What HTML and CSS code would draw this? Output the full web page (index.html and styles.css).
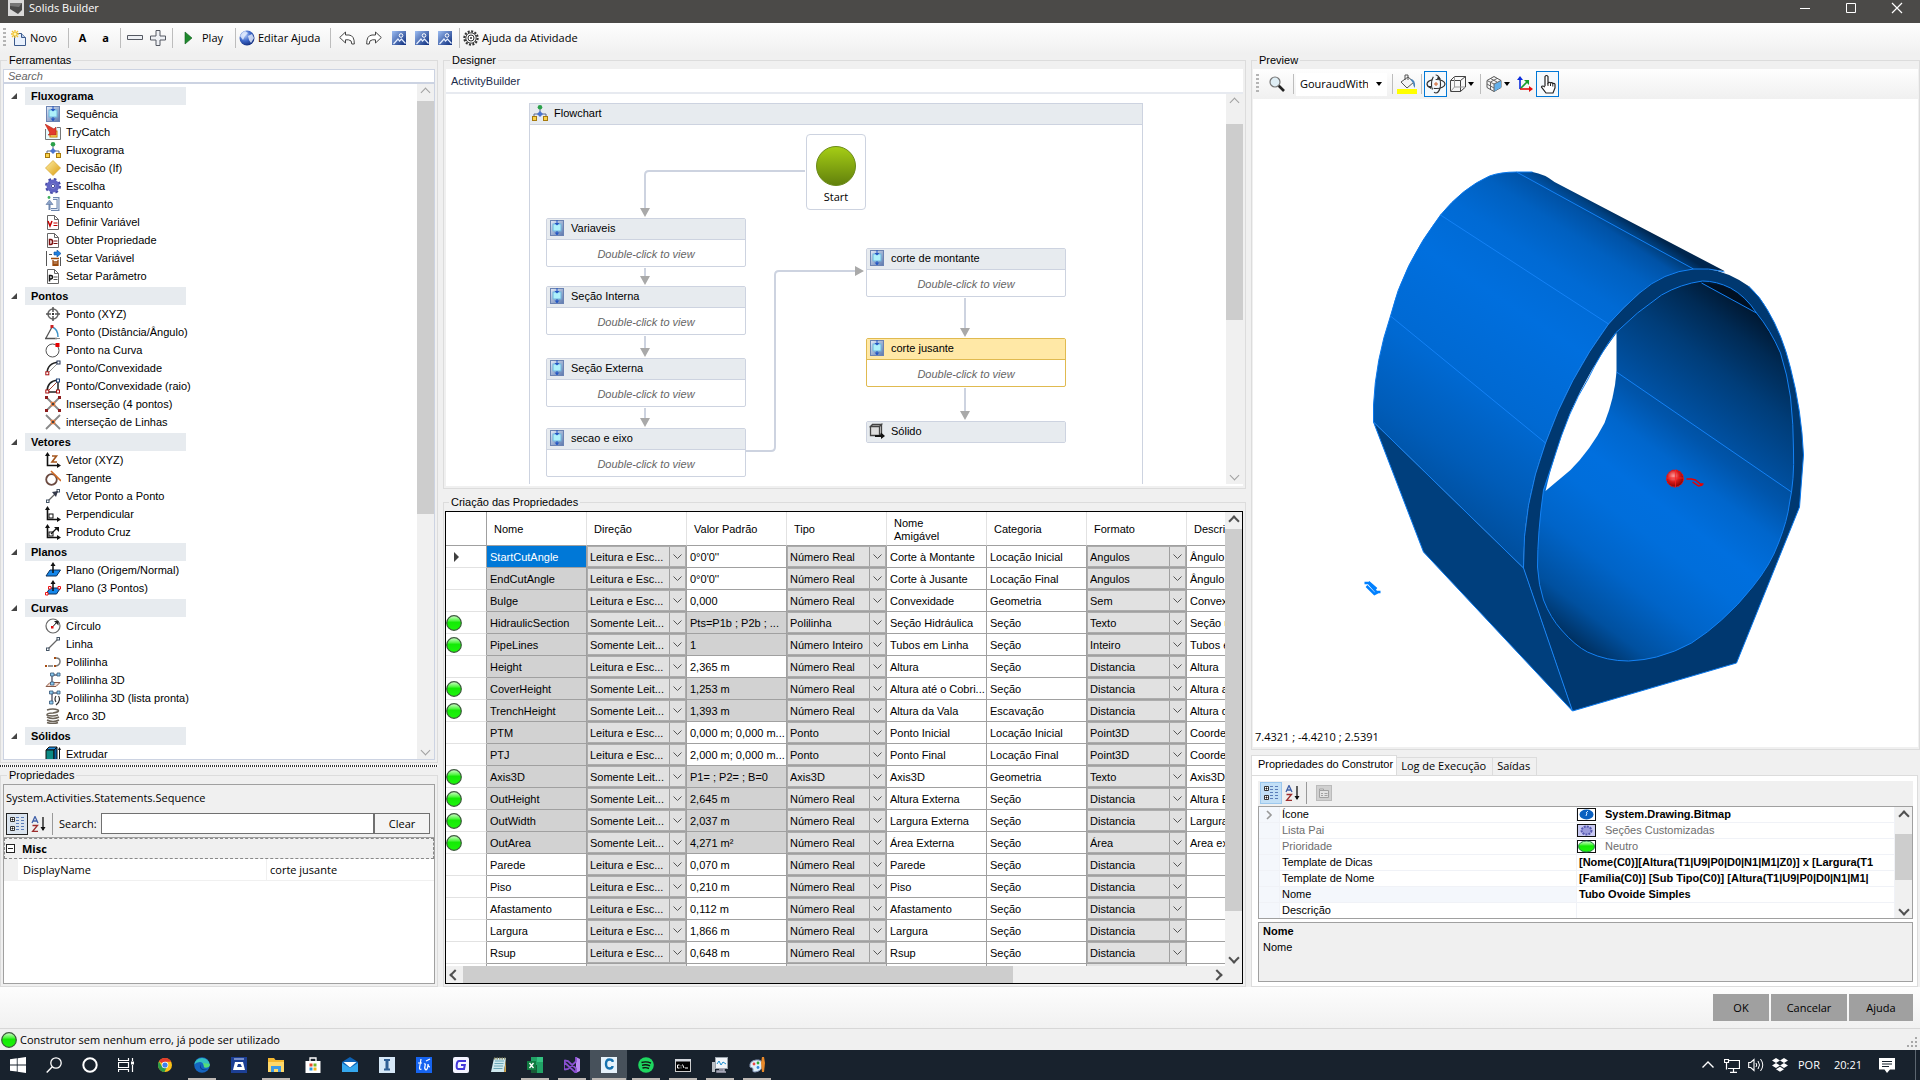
FILE: index.html
```html
<!DOCTYPE html>
<html lang="pt-BR">
<head>
<meta charset="utf-8">
<title>Solids Builder</title>
<link rel="stylesheet" href="styles.css">
</head>
<body>
<svg class="sprite" aria-hidden="true">
  <defs>
    <linearGradient id="g-seq" x1="0" y1="0" x2="1" y2="1"><stop offset="0" stop-color="#e4ecf8"/><stop offset="1" stop-color="#5c78ad"/></linearGradient>
    <linearGradient id="g-ball" x1="0" y1="0" x2="0" y2="1"><stop offset="0" stop-color="#d6ffd0"/><stop offset=".35" stop-color="#4df53e"/><stop offset=".45" stop-color="#14ea05"/><stop offset="1" stop-color="#1df40c"/></linearGradient>
    <linearGradient id="g-gold" x1="0" y1="0" x2="1" y2="1"><stop offset="0" stop-color="#fff0a8"/><stop offset="1" stop-color="#d99a0c"/></linearGradient>
    <linearGradient id="g-img" x1="0" y1="0" x2="1" y2="1"><stop offset="0" stop-color="#9dbdf2"/><stop offset="1" stop-color="#0a2b7c"/></linearGradient>
    <linearGradient id="g-start" x1="0" y1="0" x2="0" y2="1"><stop offset="0" stop-color="#a6ce15"/><stop offset="1" stop-color="#61800c"/></linearGradient>
    <radialGradient id="g-globe" cx=".35" cy=".3" r=".8"><stop offset="0" stop-color="#b9d0fb"/><stop offset=".5" stop-color="#3c66c8"/><stop offset="1" stop-color="#0c2471"/></radialGradient>
    <radialGradient id="g-red" cx=".4" cy=".35" r=".7"><stop offset="0" stop-color="#ff9a9a"/><stop offset=".5" stop-color="#d81a1a"/><stop offset="1" stop-color="#7c0000"/></radialGradient>
  </defs>
  <symbol id="i-seq" viewBox="0 0 16 16"><rect x="1.500" y=".5" width="13" height="15" fill="url(#g-seq)" stroke="#6b83b3"/><rect x="4" y="4" width="8" height="7" fill="#aef0fb" stroke="#6fb4dd"/><path d="M8 0v4M8 11v4" stroke="#2257c4"/><path d="M5.500 3h5L8 5.500zM5.500 12.500h5L8 15z" fill="#2257c4"/></symbol>
  <symbol id="i-try" viewBox="0 0 16 16"><path d="M.5 5v10.500h15V3.500H12" fill="#e6fbff" stroke="#777"/><rect x="5" y="7" width="7" height="6" fill="#fff36a" stroke="#c87d00"/><path d="M0 0l9 5 2-2 0 8H3l2-2z" fill="#e23b2b" stroke="#b4271a" stroke-width=".6"/></symbol>
  <symbol id="i-flow" viewBox="0 0 16 16"><path d="M8 3v6M2 12V9h12v3" fill="none" stroke="#5a6a8c"/><circle cx="8" cy="2.300" r="2.300" fill="#2aa14a"/><path d="M8 6l3 3-3 3-3-3z" fill="#4b74cf"/><rect x=".5" y="11.500" width="4" height="4" fill="#fbd34b" stroke="#a77a0d"/><rect x="11.500" y="11.500" width="4" height="4" fill="#fbd34b" stroke="#a77a0d"/></symbol>
  <symbol id="i-if" viewBox="0 0 16 16"><path d="M8 .5L15.500 8 8 15.500.5 8z" fill="url(#g-gold)" stroke="#d7a32a" stroke-width=".7"/></symbol>
  <symbol id="i-gear" viewBox="0 0 16 16"><circle cx="8" cy="8" r="6.500" fill="none" stroke="#4548a5" stroke-width="3" stroke-dasharray="2.500 2.600"/><circle cx="8" cy="8" r="4.500" fill="#b6b8ec" stroke="#6265c4" stroke-width="4"/><circle cx="8" cy="8" r="1.800" fill="#fff" stroke="#373a92"/></symbol>
  <symbol id="i-while" viewBox="0 0 16 16"><path d="M8 2.500h5v11H6" fill="none" stroke="#6f87ae" stroke-width="3"/><path d="M8 2.500h5v11H6" fill="none" stroke="#dce6f5"/><path d="M4.500 14V7" stroke="#6f87ae" stroke-width="2"/><path d="M1 8.500L4.500 4 8 8.500z" fill="#8ba2c7" stroke="#5d769f" stroke-width=".6"/><circle cx="4" cy="1.500" r="1.400" fill="#3faf5c"/></symbol>
  <symbol id="i-doc" viewBox="0 0 16 16"><path d="M2.500 1.500h7l4 4v10h-11z" fill="#fff" stroke="#666"/><path d="M9.500 1.500v4h4" fill="none" stroke="#666"/></symbol>
  <symbol id="i-docv" viewBox="0 0 16 16"><use href="#i-doc"/><path d="M3 7l2 5 2-5" fill="none" stroke="#c40000" stroke-width="1.500"/><path d="M8.500 9h4M8.500 11.500h4" stroke="#c40000"/></symbol>
  <symbol id="i-docd" viewBox="0 0 16 16"><use href="#i-doc"/><path d="M4.500 7.500v5h1.500q1.500 0 1.500-2.500T6 7.500z" fill="none" stroke="#7c1010" stroke-width="1.500"/><path d="M8.500 9h4M8.500 11.500h4" stroke="#7c1010"/></symbol>
  <symbol id="i-docp" viewBox="0 0 16 16"><use href="#i-doc"/><path d="M4.500 13.500v-6H6q1.500 0 1.500 1.700T6 11H4.500" fill="none" stroke="#111" stroke-width="1.500"/><path d="M8.500 9h4M8.500 11.500h4" stroke="#555"/></symbol>
  <symbol id="i-setv" viewBox="0 0 16 16"><path d="M1.500 1v15M15.500 7v9M4 4.500h3" stroke="#555"/><path d="M9 2h3V0l4 3.500L12 7V5H9z" fill="#1d7fe0" stroke="#0b4f9c" stroke-width=".6"/><path d="M6 8.500h8M8 10v5.500h5V10M8 12h5M8 14h5" fill="none" stroke="#9a4a0e" stroke-width="1.300"/></symbol>
  <symbol id="i-xyz" viewBox="0 0 16 16"><circle cx="8" cy="8" r="5" fill="none" stroke="#666" stroke-width="1.500"/><path d="M8 1v5M8 10v5M1 8h5M10 8h5" stroke="#555" stroke-width="1.500"/><rect x="7" y="7" width="2" height="2" fill="#333"/></symbol>
  <symbol id="i-ang" viewBox="0 0 16 16"><path d="M0 14.500h12M1 14L7 3" stroke="#555" stroke-width="1.300" fill="none"/><path d="M7 3q6 2 6 10" fill="none" stroke="#3d93c8" stroke-width="1.500"/><rect x="5.500" y="1" width="3" height="3" fill="#c22"/><path d="M10 14.500h5" stroke="#888"/></symbol>
  <symbol id="i-oncurve" viewBox="0 0 16 16"><circle cx="7.500" cy="8.500" r="6.500" fill="#fff" stroke="#555"/><rect x="10.500" y="1" width="4" height="4" fill="#e60000"/></symbol>
  <symbol id="i-conv" viewBox="0 0 16 16"><path d="M2 14Q2 3 14 2" fill="none" stroke="#222" stroke-width="1.500"/><path d="M3 13L13 3" stroke="#999"/><rect x=".8" y="11.800" width="3" height="3" fill="#fff" stroke="#a11"/><rect x="12" y="1" width="3" height="3" fill="#fff" stroke="#235"/></symbol>
  <symbol id="i-convr" viewBox="0 0 16 16"><path d="M2 14Q2 3 13 2V14H3z" fill="none" stroke="#222" stroke-width="1.500"/><path d="M3 13L13 3" stroke="#a43"/><rect x=".8" y="12" width="3" height="3" fill="#fff" stroke="#a11"/><rect x="11.500" y="1" width="3" height="3" fill="#fff" stroke="#247"/><rect x="11.500" y="12" width="3" height="3" fill="#fff" stroke="#a11"/></symbol>
  <symbol id="i-lines" viewBox="0 0 16 16"><path d="M1 1l14 14M15 1L1 15" stroke="#888" stroke-width="1.800"/><rect x="6.300" y="6.300" width="3.400" height="3.400" fill="#444" stroke="#f08040"/></symbol>
  <symbol id="i-int4" viewBox="0 0 16 16"><use href="#i-lines"/><path d="M0 0h3v3H0zM13 0h3v3h-3zM0 13h3v3H0zM13 13h3v3h-3z" fill="#8d1c1c"/></symbol>
  <symbol id="i-vec" viewBox="0 0 16 16"><path d="M2.500 2v11.500H14" fill="none" stroke="#111" stroke-width="1.600"/><path d="M0 4l2.500-4L5 4zM12 11l4 2.500-4 2.500z" fill="#111"/></symbol>
  <symbol id="i-vecz" viewBox="0 0 16 16"><use href="#i-vec"/><path d="M7 4h4.500L7 10h5" fill="none" stroke="#a4561c" stroke-width="1.600"/></symbol>
  <symbol id="i-tan" viewBox="0 0 16 16"><circle cx="6.500" cy="9.500" r="5.300" fill="none" stroke="#6b4a40" stroke-width="1.800"/><path d="M6 1l10 10" stroke="#d06a24" stroke-width="1.600"/></symbol>
  <symbol id="i-line" viewBox="0 0 16 16"><path d="M3 13L13 3" stroke="#666" stroke-width="1.300"/><rect x="1.500" y="12" width="2.500" height="2.500" fill="#fff" stroke="#456"/><rect x="12" y="1.500" width="2.500" height="2.500" fill="#fff" stroke="#456"/></symbol>
  <symbol id="i-p2p" viewBox="0 0 16 16"><use href="#i-line"/><path d="M7 4l6-1-2 6z" fill="#333848"/></symbol>
  <symbol id="i-perp" viewBox="0 0 16 16"><use href="#i-vec"/><rect x="4" y="8" width="4" height="4" fill="none" stroke="#111"/></symbol>
  <symbol id="i-cross" viewBox="0 0 16 16"><use href="#i-perp"/><path d="M6 10l6-6" stroke="#111" stroke-width="1.300"/><path d="M9 3h5v5z" fill="#111"/></symbol>
  <symbol id="i-plane" viewBox="0 0 16 16"><path d="M1 14l4-6h10.500l-4 6z" fill="#1587ea" stroke="#0b2e5a"/><path d="M8 11V3" stroke="#111" stroke-width="1.500"/><path d="M5.500 4L8 0l2.500 4z" fill="#111"/></symbol>
  <symbol id="i-plane3" viewBox="0 0 16 16"><use href="#i-plane"/><path d="M.5 12.500h2.500v2.500H.5zM3.500 6.500H6V9H3.500zM13 6.500h2.500V9H13z" fill="#fff" stroke="#e11"/></symbol>
  <symbol id="i-circ" viewBox="0 0 16 16"><circle cx="8" cy="8" r="7" fill="#fff" stroke="#666" stroke-width="1.200"/><path d="M8 8.500L12 4" stroke="#111"/><path d="M9 3h4.500v4.500z" fill="#222"/><rect x="6" y="8" width="2.500" height="2.500" fill="#d11"/></symbol>
  <symbol id="i-poly" viewBox="0 0 16 16"><path d="M3 12h5M11 4q4 0 4 3.500T11 12" fill="none" stroke="#777" stroke-width="1.500"/><path d="M0 11h2v2H0zM9 11h2v2H9zM9 3h2v2H9z" fill="#a64d12"/></symbol>
  <symbol id="i-poly3" viewBox="0 0 16 16"><path d="M1 14.500l4-4h10l-4 4z" fill="#f6dcd0" stroke="#8a5a48"/><path d="M7 12V3h6" stroke="#667" fill="none" stroke-width="1.500"/><path d="M5.500 1H9v3H5.500zM12 1h3v3h-3zM5.500 10H9v3H5.500z" fill="#8cc8ef" stroke="#357" stroke-width=".8"/></symbol>
  <symbol id="i-poly3l" viewBox="0 0 16 16"><path d="M7 12V3h6" stroke="#667" fill="none" stroke-width="1.500"/><path d="M4.500 1H8v3H4.500zM12 1h3v3h-3zM4.500 11H8v3H4.500z" fill="#8cc8ef" stroke="#357" stroke-width=".8"/><path d="M11 6q-2 3 0 6M13.500 6q2 3 0 6M11 15l3-3" fill="none" stroke="#333" stroke-width="1.200"/></symbol>
  <symbol id="i-arc3" viewBox="0 0 16 16"><path d="M2 2q6-2 11 0 2 2-5 3Q2 5 2 7q5 2 11 0M2 9q6 3 12 0M2 12q6 3 12 0M2 14.500q6 2 11 0" fill="none" stroke="#6b6358" stroke-width="1.600"/></symbol>
  <symbol id="i-extr" viewBox="0 0 16 16"><path d="M1 4l3-3h8L9 4z" fill="#1b8de0" stroke="#111"/><path d="M1 4h8v12H1z" fill="#0b8a84" stroke="#111"/><path d="M9 4l3-3v12l-3 3z" fill="#0761a5" stroke="#111"/><path d="M14.500 16V3" stroke="#111"/><path d="M13 4l1.500-3L16 4z" fill="#111"/></symbol>
  <symbol id="i-solid" viewBox="0 0 16 16"><path d="M1.500 3.500l2-2h9l-2 2zM1.500 3.500h9v9h-9zM10.500 3.500l2-2v9l-2 2z" fill="#ddd" stroke="#444" stroke-width="1.300"/><path d="M6 12h6V9.500l4 3.500-4 3v-2H6z" fill="#111"/></symbol>
  <symbol id="i-ball" viewBox="0 0 16 16"><circle cx="8" cy="8" r="7.300" fill="url(#g-ball)" stroke="#3c5a3c" stroke-width="1.200"/></symbol>
  <symbol id="i-new" viewBox="0 0 16 16"><path d="M3.500 3.500h7l4 4v8h-11z" fill="#e9f1fd" stroke="#3c5a8c"/><path d="M10.500 3.500v4h4" fill="#b9cdea" stroke="#3c5a8c"/><path d="M4 0v8M0 4h8M1 1l6 6M7 1L1 7" stroke="#f1c232" stroke-width="1.300"/><circle cx="4" cy="4" r="1.500" fill="#fff6b0"/></symbol>
  <symbol id="i-minus" viewBox="0 0 16 16"><path d="M.5 5.500h15v4H.5z" fill="#eef0f4" stroke="#555962"/></symbol>
  <symbol id="i-plus" viewBox="0 0 16 16"><path d="M6 .5h4V6h5.500v4H10v5.500H6V10H.5V6H6z" fill="#eef0f4" stroke="#555962"/></symbol>
  <symbol id="i-play" viewBox="0 0 16 16"><path d="M5 2l7 6-7 6z" fill="#1f8a2e" stroke="#115c1b" stroke-width=".6"/></symbol>
  <symbol id="i-globe" viewBox="0 0 16 16"><circle cx="8" cy="8" r="7.500" fill="url(#g-globe)"/><path d="M1 6q2-4 5-5l3 2-3 3-2 4zM9 6l4-2 2 4-3 5-2-3z" fill="#e8f0ff" opacity=".8"/></symbol>
  <symbol id="i-undo" viewBox="0 0 16 16"><path d="M.7 7.500L6.500 2v3H10q5.500.5 5.300 9h-2.500q.2-4-3.300-4.200h-3v3.200z" fill="#fff" stroke="#444"/></symbol>
  <symbol id="i-redo" viewBox="0 0 16 16"><path d="M15.300 7.500L9.500 2v3H6Q.5 5.500.7 14h2.500Q3 10 6.500 9.800h3V13z" fill="#fff" stroke="#444"/></symbol>
  <symbol id="i-img" viewBox="0 0 16 16"><rect x="1" y="1" width="14" height="14" fill="url(#g-img)"/><circle cx="10" cy="5.500" r="1.800" fill="none" stroke="#fff"/><path d="M2.500 14l4.500-5 1.500 2 2-2 4 4.500" fill="none" stroke="#e6efff" stroke-width="1.200"/></symbol>
  <symbol id="i-cog" viewBox="0 0 16 16"><circle cx="8" cy="8" r="6.600" fill="none" stroke="#333" stroke-width="2.200" stroke-dasharray="2 1.450"/><circle cx="8" cy="8" r="5.200" fill="#f3f3f3" stroke="#444"/><circle cx="8" cy="8" r="3" fill="#fff" stroke="#333"/><circle cx="8" cy="8" r="1" fill="#333"/></symbol>
  <symbol id="i-zoom" viewBox="0 0 16 16"><path d="M9.500 9.500l5.500 5.500" stroke="#222" stroke-width="2.600"/><circle cx="6" cy="6" r="5" fill="#dfeef5" stroke="#777" stroke-width="1.200"/></symbol>
  <symbol id="i-fill" viewBox="0 0 20 20"><path d="M4 8l7-5 6 5-7 6z" fill="#f4f4f4" stroke="#555"/><path d="M8 6V1h3v5" fill="none" stroke="#555"/><path d="M13 5q6 0 5 9-2-2-2-5z" fill="#4a84b8"/><rect x="0" y="15" width="20" height="5" fill="#ff0"/></symbol>
  <symbol id="i-orbit" viewBox="0 0 20 20"><ellipse cx="10" cy="10" rx="9" ry="4.500" fill="none" stroke="#333" stroke-width="1.200" stroke-dasharray="13 3"/><ellipse cx="10" cy="10" rx="4.500" ry="9" fill="none" stroke="#333" stroke-width="1.200" stroke-dasharray="13 3"/><path d="M6.500 6.500h7v7h-7z" fill="#f4f9fd"/><path d="M10 8v4M8 10h4" stroke="#d2612a"/><path d="M12 2l3 3-4 0zM1 12l4 3 0-3z" fill="#333"/></symbol>
  <symbol id="i-wire" viewBox="0 0 16 16"><path d="M.5 4.500h10v11H.5zM.5 4.500l4-4h11l-5 4M15.500.5V11l-5 4.500" fill="none" stroke="#444"/><path d="M4.500.5V11H15M4.500 11l-4 4.500" fill="none" stroke="#999"/></symbol>
  <symbol id="i-iso" viewBox="0 0 16 16"><path d="M8 .5L15 4.500v7L8 15.500l-7-4v-7z" fill="#f6f6f6" stroke="#555"/><path d="M8 8l7-3.500v7L8 15.500z" fill="#63b0ea"/><path d="M1 4.500L8 8l7-3.500M8 8v7.500M4.500 2.500L11 6M11 2.500L4.500 6v7M1 8l7 4" fill="none" stroke="#666"/></symbol>
  <symbol id="i-axes" viewBox="0 0 16 16"><path d="M3 13V2" stroke="#0a2bdc" stroke-width="1.600"/><path d="M0 4l3-4 3 4z" fill="#0a2bdc"/><path d="M3 13h10" stroke="#e60a0a" stroke-width="1.600"/><path d="M12 10l4 3-4 3z" fill="#e60a0a"/><path d="M4 12l6-6" stroke="#1a9b2a" stroke-width="1.600"/><path d="M7 4h5v5z" fill="#1a9b2a"/></symbol>
  <symbol id="i-hand" viewBox="0 0 16 20"><path d="M5 12V2.500q1.500-2 3 0V9q1-1.500 2.500 0 1-1 2.300.5 2-.5 2.200 1V14l-2 5H6l-4.500-6q.5-2 3.500 0" fill="#fff" stroke="#222" stroke-width="1.200"/><path d="M8 9v3M10.500 9.500V12M12.800 10v2.500" stroke="#222"/></symbol>
  <symbol id="i-cat" viewBox="0 0 16 16"><path d="M1.500 1.500h4v4h-4zM1.500 10.500h4v4h-4z" fill="#fff" stroke="#333"/><path d="M2.500 3.500h2M3.500 2.500v2M2.500 12.500h2M3.500 11.500v2" stroke="#111"/><path d="M7 1.500h3M7 4.500h3M7 7.500h3M7 10.500h3M7 13.500h3M12 1.500h3M12 4.500h3M12 7.500h3M12 10.500h3M12 13.500h3" stroke="#5b7db8"/></symbol>
  <symbol id="i-az" viewBox="0 0 16 16"><path d="M1 7l3-6.500L7 7M2 5h4" fill="none" stroke="#4060a8" stroke-width="1.300"/><path d="M1.500 9.500h5l-5 6h5.500" fill="none" stroke="#9c2d2d" stroke-width="1.300"/><path d="M12 1v13" stroke="#111" stroke-width="1.300"/><path d="M9.500 11h5L12 15z" fill="#111"/></symbol>
  <symbol id="i-page" viewBox="0 0 16 16"><rect x=".5" y=".5" width="15" height="15" fill="#d0d0d0" stroke="#bbb"/><path d="M3.500 5.500h9v7h-9zM3.500 5.500V4h4v1.500M5 8.500h2M5 10.500h2M8.500 8.500h3M8.500 10.500h3" fill="#e4e4e4" stroke="#a2a2a2"/></symbol>
</svg>

<header class="titlebar">
  <svg class="titlebar-icon" viewBox="0 0 16 16"><rect width="16" height="16" fill="#d9d9d9"/><path d="M2 3h12v7l-4 4-8-5z" fill="#4a4a4a"/><path d="M2 3h12l-3 4-9-1z" fill="#777"/></svg>
  <h1>Solids Builder</h1>
  <div class="window-controls">
    <button type="button" aria-label="Minimizar"><svg viewBox="0 0 12 12"><path d="M1 6.500h10" stroke="#fff"/></svg></button>
    <button type="button" aria-label="Maximizar"><svg viewBox="0 0 12 12"><path d="M1.500 1.500h9v9h-9z" fill="none" stroke="#fff"/></svg></button>
    <button type="button" aria-label="Fechar"><svg viewBox="0 0 12 12"><path d="M1 1l10 10M11 1L1 11" stroke="#fff" stroke-width="1.200"/></svg></button>
  </div>
</header>

<div class="toolbar main-toolbar" role="toolbar" aria-label="Principal">
  <span class="grip"></span>
  <button type="button" class="tool tool-new"><svg class="icon"><use href="#i-new"/></svg>Novo</button>
  <span class="sep"></span>
  <button type="button" class="tool tool-icon tool-letter">A</button>
  <button type="button" class="tool tool-icon tool-letter">a</button>
  <span class="sep"></span>
  <button type="button" class="tool tool-icon" aria-label="Recolher"><svg class="icon"><use href="#i-minus"/></svg></button>
  <button type="button" class="tool tool-icon" aria-label="Expandir"><svg class="icon"><use href="#i-plus"/></svg></button>
  <span class="sep"></span>
  <button type="button" class="tool tool-play"><svg class="icon"><use href="#i-play"/></svg>Play</button>
  <span class="sep"></span>
  <button type="button" class="tool tool-help"><svg class="icon"><use href="#i-globe"/></svg>Editar Ajuda</button>
  <span class="sep"></span>
  <button type="button" class="tool tool-history" aria-label="Desfazer"><svg class="icon"><use href="#i-undo"/></svg></button>
  <button type="button" class="tool tool-history" aria-label="Refazer"><svg class="icon"><use href="#i-redo"/></svg></button>
  <button type="button" class="tool tool-icon" aria-label="Imagem 1"><svg class="icon"><use href="#i-img"/></svg></button>
  <button type="button" class="tool tool-icon" aria-label="Imagem 2"><svg class="icon"><use href="#i-img"/></svg></button>
  <button type="button" class="tool tool-icon" aria-label="Imagem 3"><svg class="icon"><use href="#i-img"/></svg></button>
  <span class="sep"></span>
  <button type="button" class="tool"><svg class="icon"><use href="#i-cog"/></svg>Ajuda da Atividade</button>
</div>

<main class="workspace">
  <div class="column column-left">
    <fieldset class="group toolbox-group">
      <legend>Ferramentas</legend>
      <input class="toolbox-search" type="text" placeholder="Search" aria-label="Search">
      <div class="toolbox">
        <div class="toolbox-list">
          <h2 class="category">Fluxograma</h2>
          <ul>
            <li><svg class="icon"><use href="#i-seq"/></svg>Sequência</li>
            <li><svg class="icon"><use href="#i-try"/></svg>TryCatch</li>
            <li><svg class="icon"><use href="#i-flow"/></svg>Fluxograma</li>
            <li><svg class="icon"><use href="#i-if"/></svg>Decisão (If)</li>
            <li><svg class="icon"><use href="#i-gear"/></svg>Escolha</li>
            <li><svg class="icon"><use href="#i-while"/></svg>Enquanto</li>
            <li><svg class="icon"><use href="#i-docv"/></svg>Definir Variável</li>
            <li><svg class="icon"><use href="#i-docd"/></svg>Obter Propriedade</li>
            <li><svg class="icon"><use href="#i-setv"/></svg>Setar Variável</li>
            <li><svg class="icon"><use href="#i-docp"/></svg>Setar Parâmetro</li>
          </ul>
          <h2 class="category">Pontos</h2>
          <ul>
            <li><svg class="icon"><use href="#i-xyz"/></svg>Ponto (XYZ)</li>
            <li><svg class="icon"><use href="#i-ang"/></svg>Ponto (Distância/Ângulo)</li>
            <li><svg class="icon"><use href="#i-oncurve"/></svg>Ponto na Curva</li>
            <li><svg class="icon"><use href="#i-conv"/></svg>Ponto/Convexidade</li>
            <li><svg class="icon"><use href="#i-convr"/></svg>Ponto/Convexidade (raio)</li>
            <li><svg class="icon"><use href="#i-int4"/></svg>Inserseção (4 pontos)</li>
            <li><svg class="icon"><use href="#i-lines"/></svg>interseção de Linhas</li>
          </ul>
          <h2 class="category">Vetores</h2>
          <ul>
            <li><svg class="icon"><use href="#i-vecz"/></svg>Vetor (XYZ)</li>
            <li><svg class="icon"><use href="#i-tan"/></svg>Tangente</li>
            <li><svg class="icon"><use href="#i-p2p"/></svg>Vetor Ponto a Ponto</li>
            <li><svg class="icon"><use href="#i-perp"/></svg>Perpendicular</li>
            <li><svg class="icon"><use href="#i-cross"/></svg>Produto Cruz</li>
          </ul>
          <h2 class="category">Planos</h2>
          <ul>
            <li><svg class="icon"><use href="#i-plane"/></svg>Plano (Origem/Normal)</li>
            <li><svg class="icon"><use href="#i-plane3"/></svg>Plano (3 Pontos)</li>
          </ul>
          <h2 class="category">Curvas</h2>
          <ul>
            <li><svg class="icon"><use href="#i-circ"/></svg>Círculo</li>
            <li><svg class="icon"><use href="#i-line"/></svg>Linha</li>
            <li><svg class="icon"><use href="#i-poly"/></svg>Polilinha</li>
            <li><svg class="icon"><use href="#i-poly3"/></svg>Polilinha 3D</li>
            <li><svg class="icon"><use href="#i-poly3l"/></svg>Polilinha 3D (lista pronta)</li>
            <li><svg class="icon"><use href="#i-arc3"/></svg>Arco 3D</li>
          </ul>
          <h2 class="category">Sólidos</h2>
          <ul>
            <li><svg class="icon"><use href="#i-extr"/></svg>Extrudar</li>
          </ul>
        </div>
        <div class="vscroll toolbox-scroll" aria-hidden="true"><span class="arrow up"></span><span class="thumb"></span><span class="track"></span><span class="arrow down"></span></div>
      </div>
    </fieldset>
    <div class="splitter"></div>
    <fieldset class="group inspector-group">
      <legend>Propriedades</legend>
      <div class="inspector">
        <p class="inspector-type">System.Activities.Statements.Sequence</p>
        <div class="inspector-tools">
          <button type="button" class="mini active" aria-label="Por categoria"><svg class="icon"><use href="#i-cat"/></svg></button>
          <button type="button" class="mini" aria-label="Alfabética"><svg class="icon"><use href="#i-az"/></svg></button>
          <span class="mini-sep"></span>
          <label for="prop-search">Search:</label>
          <input id="prop-search" type="text">
          <button type="button" class="clear">Clear</button>
        </div>
        <div class="inspector-body">
          <h2 class="inspector-category"><span class="collapse"></span>Misc</h2>
          <div class="inspector-row"><label for="display-name">DisplayName</label><input id="display-name" type="text" value="corte jusante"></div>
        </div>
      </div>
    </fieldset>
  </div>

  <div class="column column-middle">
    <fieldset class="group designer-group">
      <legend>Designer</legend>
      <div class="designer">
        <p class="breadcrumb">ActivityBuilder</p>
        <div class="designer-view">
          <div class="designer-surface">
            <div class="flowchart">
              <h2 class="node-title"><svg class="icon"><use href="#i-flow"/></svg>Flowchart</h2>
              <svg class="links" viewBox="0 0 612 380" aria-hidden="true">
                <g fill="none" stroke="#cdd3e0" stroke-width="2">
                  <path d="M275 67H119q-4 0-4 4v34M115 164v10M115 232v14M115 304v12M216 347h25q4 0 4-4V171q0-4 4-4h76M435 194v32M435 284v26"/>
                </g>
                <path d="M110 104h10l-5 9zM110 172h10l-5 9zM110 244h10l-5 9zM110 314h10l-5 9zM325 162v10l9-5zM430 224h10l-5 9zM430 307h10l-5 9z" fill="#a9a9a9"/>
              </svg>
              <div class="node start"><svg viewBox="0 0 40 40"><circle cx="20" cy="20" r="19.500" fill="url(#g-start)" stroke="#6b8a1a"/></svg><span>Start</span></div>
              <article class="node n-variaveis"><h3 class="node-title"><svg class="icon"><use href="#i-seq"/></svg>Variaveis</h3><p>Double-click to view</p></article>
              <article class="node n-interna"><h3 class="node-title"><svg class="icon"><use href="#i-seq"/></svg>Seção Interna</h3><p>Double-click to view</p></article>
              <article class="node n-externa"><h3 class="node-title"><svg class="icon"><use href="#i-seq"/></svg>Seção Externa</h3><p>Double-click to view</p></article>
              <article class="node n-eixo"><h3 class="node-title"><svg class="icon"><use href="#i-seq"/></svg>secao e eixo</h3><p>Double-click to view</p></article>
              <article class="node n-montante"><h3 class="node-title"><svg class="icon"><use href="#i-seq"/></svg>corte de montante</h3><p>Double-click to view</p></article>
              <article class="node n-jusante selected"><h3 class="node-title"><svg class="icon"><use href="#i-seq"/></svg>corte jusante</h3><p>Double-click to view</p></article>
              <article class="node n-solido"><h3 class="node-title"><svg class="icon"><use href="#i-solid"/></svg>Sólido</h3></article>
            </div>
          </div>
          <div class="vscroll designer-scroll" aria-hidden="true"><span class="arrow up"></span><span class="gap"></span><span class="thumb"></span><span class="track"></span><span class="arrow down"></span></div>
        </div>
      </div>
    </fieldset>

    <fieldset class="group data-group">
      <legend>Criação das Propriedades</legend>
      <div class="datagrid">
        <div class="datagrid-view">
          <div class="datagrid-clip">
            <table>
              <colgroup><col class="c-head"><col span="8" class="c-data"></colgroup>
              <thead><tr><th></th><th>Nome</th><th>Direção</th><th>Valor Padrão</th><th>Tipo</th><th>Nome<br>Amigável</th><th>Categoria</th><th>Formato</th><th>Descrição</th></tr></thead>
              <tbody>
                <tr><td class="rh"><span class="current"></span></td><td class="sel">StartCutAngle</td><td class="cb"><select aria-label="Direção"><option>Leitura e Esc...</option></select></td><td>0°0'0''</td><td class="cb"><select aria-label="Tipo"><option>Número Real</option></select></td><td>Corte à Montante</td><td>Locação Inicial</td><td class="cb"><select aria-label="Formato"><option>Angulos</option></select></td><td>Ângulo</td></tr>
                <tr><td class="rh"></td><td class="ro">EndCutAngle</td><td class="cb"><select aria-label="Direção"><option>Leitura e Esc...</option></select></td><td>0°0'0''</td><td class="cb"><select aria-label="Tipo"><option>Número Real</option></select></td><td>Corte à Jusante</td><td>Locação Final</td><td class="cb"><select aria-label="Formato"><option>Angulos</option></select></td><td>Ângulo</td></tr>
                <tr><td class="rh"></td><td class="ro">Bulge</td><td class="cb"><select aria-label="Direção"><option>Leitura e Esc...</option></select></td><td>0,000</td><td class="cb"><select aria-label="Tipo"><option>Número Real</option></select></td><td>Convexidade</td><td>Geometria</td><td class="cb"><select aria-label="Formato"><option>Sem</option></select></td><td>Convexidade</td></tr>
                <tr><td class="rh"><svg class="icon"><use href="#i-ball"/></svg></td><td class="ro">HidraulicSection</td><td class="cb"><select aria-label="Direção"><option>Somente Leit...</option></select></td><td class="ro">Pts=P1b ; P2b ; ...</td><td class="cb"><select aria-label="Tipo"><option>Polilinha</option></select></td><td>Seção Hidráulica</td><td>Seção</td><td class="cb"><select aria-label="Formato"><option>Texto</option></select></td><td>Seção útil</td></tr>
                <tr><td class="rh"><svg class="icon"><use href="#i-ball"/></svg></td><td class="ro">PipeLines</td><td class="cb"><select aria-label="Direção"><option>Somente Leit...</option></select></td><td class="ro">1</td><td class="cb"><select aria-label="Tipo"><option>Número Inteiro</option></select></td><td>Tubos em Linha</td><td>Seção</td><td class="cb"><select aria-label="Formato"><option>Inteiro</option></select></td><td>Tubos em</td></tr>
                <tr><td class="rh"></td><td class="ro">Height</td><td class="cb"><select aria-label="Direção"><option>Leitura e Esc...</option></select></td><td>2,365 m</td><td class="cb"><select aria-label="Tipo"><option>Número Real</option></select></td><td>Altura</td><td>Seção</td><td class="cb"><select aria-label="Formato"><option>Distancia</option></select></td><td>Altura</td></tr>
                <tr><td class="rh"><svg class="icon"><use href="#i-ball"/></svg></td><td class="ro">CoverHeight</td><td class="cb"><select aria-label="Direção"><option>Somente Leit...</option></select></td><td class="ro">1,253 m</td><td class="cb"><select aria-label="Tipo"><option>Número Real</option></select></td><td>Altura até o Cobri...</td><td>Seção</td><td class="cb"><select aria-label="Formato"><option>Distancia</option></select></td><td>Altura até</td></tr>
                <tr><td class="rh"><svg class="icon"><use href="#i-ball"/></svg></td><td class="ro">TrenchHeight</td><td class="cb"><select aria-label="Direção"><option>Somente Leit...</option></select></td><td class="ro">1,393 m</td><td class="cb"><select aria-label="Tipo"><option>Número Real</option></select></td><td>Altura da Vala</td><td>Escavação</td><td class="cb"><select aria-label="Formato"><option>Distancia</option></select></td><td>Altura da</td></tr>
                <tr><td class="rh"></td><td class="ro">PTM</td><td class="cb"><select aria-label="Direção"><option>Leitura e Esc...</option></select></td><td>0,000 m; 0,000 m...</td><td class="cb"><select aria-label="Tipo"><option>Ponto</option></select></td><td>Ponto Inicial</td><td>Locação Inicial</td><td class="cb"><select aria-label="Formato"><option>Point3D</option></select></td><td>Coordenada</td></tr>
                <tr><td class="rh"></td><td class="ro">PTJ</td><td class="cb"><select aria-label="Direção"><option>Leitura e Esc...</option></select></td><td>2,000 m; 0,000 m...</td><td class="cb"><select aria-label="Tipo"><option>Ponto</option></select></td><td>Ponto Final</td><td>Locação Final</td><td class="cb"><select aria-label="Formato"><option>Point3D</option></select></td><td>Coordenada</td></tr>
                <tr><td class="rh"><svg class="icon"><use href="#i-ball"/></svg></td><td class="ro">Axis3D</td><td class="cb"><select aria-label="Direção"><option>Somente Leit...</option></select></td><td class="ro">P1= ; P2= ; B=0</td><td class="cb"><select aria-label="Tipo"><option>Axis3D</option></select></td><td>Axis3D</td><td>Geometria</td><td class="cb"><select aria-label="Formato"><option>Texto</option></select></td><td>Axis3D</td></tr>
                <tr><td class="rh"><svg class="icon"><use href="#i-ball"/></svg></td><td class="ro">OutHeight</td><td class="cb"><select aria-label="Direção"><option>Somente Leit...</option></select></td><td class="ro">2,645 m</td><td class="cb"><select aria-label="Tipo"><option>Número Real</option></select></td><td>Altura Externa</td><td>Seção</td><td class="cb"><select aria-label="Formato"><option>Distancia</option></select></td><td>Altura Externa</td></tr>
                <tr><td class="rh"><svg class="icon"><use href="#i-ball"/></svg></td><td class="ro">OutWidth</td><td class="cb"><select aria-label="Direção"><option>Somente Leit...</option></select></td><td class="ro">2,037 m</td><td class="cb"><select aria-label="Tipo"><option>Número Real</option></select></td><td>Largura Externa</td><td>Seção</td><td class="cb"><select aria-label="Formato"><option>Distancia</option></select></td><td>Largura</td></tr>
                <tr><td class="rh"><svg class="icon"><use href="#i-ball"/></svg></td><td class="ro">OutArea</td><td class="cb"><select aria-label="Direção"><option>Somente Leit...</option></select></td><td class="ro">4,271 m²</td><td class="cb"><select aria-label="Tipo"><option>Número Real</option></select></td><td>Área Externa</td><td>Seção</td><td class="cb"><select aria-label="Formato"><option>Área</option></select></td><td>Area externa</td></tr>
                <tr><td class="rh"></td><td>Parede</td><td class="cb"><select aria-label="Direção"><option>Leitura e Esc...</option></select></td><td>0,070 m</td><td class="cb"><select aria-label="Tipo"><option>Número Real</option></select></td><td>Parede</td><td>Seção</td><td class="cb"><select aria-label="Formato"><option>Distancia</option></select></td><td></td></tr>
                <tr><td class="rh"></td><td>Piso</td><td class="cb"><select aria-label="Direção"><option>Leitura e Esc...</option></select></td><td>0,210 m</td><td class="cb"><select aria-label="Tipo"><option>Número Real</option></select></td><td>Piso</td><td>Seção</td><td class="cb"><select aria-label="Formato"><option>Distancia</option></select></td><td></td></tr>
                <tr><td class="rh"></td><td>Afastamento</td><td class="cb"><select aria-label="Direção"><option>Leitura e Esc...</option></select></td><td>0,112 m</td><td class="cb"><select aria-label="Tipo"><option>Número Real</option></select></td><td>Afastamento</td><td>Seção</td><td class="cb"><select aria-label="Formato"><option>Distancia</option></select></td><td></td></tr>
                <tr><td class="rh"></td><td>Largura</td><td class="cb"><select aria-label="Direção"><option>Leitura e Esc...</option></select></td><td>1,866 m</td><td class="cb"><select aria-label="Tipo"><option>Número Real</option></select></td><td>Largura</td><td>Seção</td><td class="cb"><select aria-label="Formato"><option>Distancia</option></select></td><td></td></tr>
                <tr><td class="rh"></td><td>Rsup</td><td class="cb"><select aria-label="Direção"><option>Leitura e Esc...</option></select></td><td>0,648 m</td><td class="cb"><select aria-label="Tipo"><option>Número Real</option></select></td><td>Rsup</td><td>Seção</td><td class="cb"><select aria-label="Formato"><option>Distancia</option></select></td><td></td></tr>
                <tr><td class="rh"></td><td></td><td class="cb"></td><td></td><td class="cb"></td><td></td><td></td><td class="cb"></td><td></td></tr>
              </tbody>
            </table>
          </div>
          <div class="vscroll data-vscroll dark" aria-hidden="true"><span class="arrow up"></span><span class="thumb"></span><span class="track"></span><span class="arrow down"></span></div>
        </div>
        <div class="hscroll dark" aria-hidden="true"><span class="arrow left"></span><span class="thumb"></span><span class="track"></span><span class="arrow right"></span><span class="corner"></span></div>
      </div>
    </fieldset>
  </div>

  <div class="column column-right">
    <fieldset class="group preview-group">
      <legend>Preview</legend>
      <div class="toolbar preview-toolbar" role="toolbar" aria-label="Preview">
        <span class="grip"></span>
        <button type="button" class="tool tool-wide" aria-label="Zoom"><svg class="icon"><use href="#i-zoom"/></svg></button>
        <span class="sep"></span>
        <select class="shading" aria-label="Sombreamento"><option>GouraudWithEdges</option></select>
        <span class="sep"></span>
        <button type="button" class="tool tool-icon" aria-label="Cor de fundo"><svg class="icon-lg"><use href="#i-fill"/></svg></button>
        <span class="sep"></span>
        <button type="button" class="tool tool-icon checked" aria-label="Orbitar"><svg class="icon-lg"><use href="#i-orbit"/></svg></button>
        <button type="button" class="tool tool-drop" aria-label="Projeção"><svg class="icon"><use href="#i-wire"/></svg><span class="caret"></span></button>
        <span class="sep"></span>
        <button type="button" class="tool tool-drop" aria-label="Vista"><svg class="icon"><use href="#i-iso"/></svg><span class="caret"></span></button>
        <button type="button" class="tool tool-icon" aria-label="Eixos"><svg class="icon"><use href="#i-axes"/></svg></button>
        <button type="button" class="tool tool-icon checked" aria-label="Mover"><svg class="icon-lg"><use href="#i-hand"/></svg></button>
      </div>
      <div class="viewport">
        <svg class="model" viewBox="1253 99 664 648" preserveAspectRatio="xMidYMid meet" role="img" aria-label="Tubo Ovoide Simples">
          <defs>
            <linearGradient id="m-outer" gradientUnits="userSpaceOnUse" x1="1634" y1="222" x2="1445" y2="510"><stop offset="0" stop-color="#00264e"/><stop offset=".03" stop-color="#004182"/><stop offset=".06" stop-color="#0052a6"/><stop offset=".13" stop-color="#0060c0"/><stop offset=".24" stop-color="#006ad4"/><stop offset=".4" stop-color="#006fde"/><stop offset=".65" stop-color="#0069d2"/><stop offset=".85" stop-color="#005cb8"/><stop offset="1" stop-color="#004f9e"/></linearGradient>
            <linearGradient id="m-inner" gradientUnits="userSpaceOnUse" x1="1760" y1="300" x2="1516" y2="625"><stop offset="0" stop-color="#001022"/><stop offset=".1" stop-color="#002a54"/><stop offset=".2" stop-color="#003d79"/><stop offset=".3" stop-color="#004b96"/><stop offset=".37" stop-color="#0055ab"/><stop offset=".45" stop-color="#0066cc"/><stop offset=".55" stop-color="#006fde"/><stop offset=".63" stop-color="#006edb"/><stop offset=".75" stop-color="#0064c8"/><stop offset=".87" stop-color="#00509f"/><stop offset=".94" stop-color="#003468"/><stop offset="1" stop-color="#000c18"/></linearGradient>
          </defs>
          <path d="M1373 422V405Q1375 360 1390 316 1402 265 1440 215 1462 188 1489 176 1500 172 1516 172H1532Q1544 174 1554 182L1724 271 1702 269Q1663 277 1639 293 1622 308 1608 324 1568 378 1545 443 1522 505 1523 568z" fill="url(#m-outer)"/>
          <path d="M1373 422L1523 568 1572 711 1423 552z" fill="#003f7d"/>
          <path d="M1523 568Q1522 505 1545 443 1568 378 1608 324 1622 308 1639 293 1663 272 1693 269H1708Q1728 272 1748 286 1760 297 1767 310 1782 335 1790 368 1801 410 1803 455L1799 507 1736 663 1572 711z" fill="#003870"/>
          <path d="M1702 281Q1680 284 1661 295 1636 312 1615 333 1587 380 1568 420 1553 460 1543 490 1537 533 1537 567 1538 585 1543 600 1550 618 1561 630 1575 646 1587 652 1606 661 1628 661 1645 660 1656 657 1675 652 1691 643 1708 632 1721 620 1738 605 1752 587 1770 565 1778 543 1787 520 1789 503 1794 480 1793 450 1793 425 1790 397 1787 375 1780 353 1770 330 1756 313 1745 296 1730 288 1716 281 1702 281z" fill="url(#m-inner)"/>
          <path d="M1702 283L1756 313Q1735 288 1718 285z" fill="#001022"/>
          <path d="M1616 333V372Q1614 398 1604 423 1590 450 1570 470L1545 491Q1553 455 1570 412 1590 367 1616 333z" fill="#fff"/>
          <g fill="none" stroke="#1482f5" stroke-width="1">
            <path d="M1516 172L1693 269M1440 215L1608 324M1390 316L1545 443M1373 422L1523 568 1572 711M1616 372L1791 492M1701 283L1756 313"/>
            <path d="M1523 568Q1522 505 1545 443 1568 378 1608 324 1622 308 1639 293 1663 272 1693 269H1708Q1716 270 1724 272M1537 567Q1537 533 1543 490L1553 460Q1568 410 1587 380 1600 353 1615 333 1636 312 1661 295 1680 284 1702 281 1716 281 1730 288 1745 296 1756 313 1770 330 1780 353 1787 375 1790 397 1793 425 1793 450 1794 480 1789 503 1787 520 1778 543 1770 565 1752 587 1738 605 1721 620 1708 632 1691 643 1675 652 1656 657 1645 660 1628 661 1606 661 1587 652 1575 646 1561 630 1550 618 1543 600 1538 585 1537 567"/>
          </g>
          <path d="M1572 711L1423 552 1373 422V405Q1375 360 1390 316 1402 265 1440 215 1462 188 1489 176 1500 172 1516 172H1532M1748 286Q1760 297 1767 310 1782 335 1790 368 1801 410 1803 455L1799 507 1736 663 1572 711" fill="none" stroke="#0a78ec"/>
          <circle cx="1674.500" cy="478.500" r="8.500" fill="url(#g-red)" stroke="#e11" stroke-dasharray="3 1"/>
          <path d="M1666 478h17M1675 470v17" stroke="#f22" stroke-width=".7"/>
          <path d="M1686 479h5l4 1 5 4h3M1692 482l6 4 4-1" fill="none" stroke="#e60000" stroke-width="1.500"/>
          <path d="M1364 583h4l8 9h4M1366 586l8 8 4-2M1368 582l8 7" fill="none" stroke="#0080ff" stroke-width="2.500"/>
        </svg>
        <output class="coords">7.4321 ; -4.4210 ; 2.5391</output>
      </div>
    </fieldset>

    <section class="tabs">
      <div class="tablist" role="tablist">
        <button type="button" role="tab" aria-selected="true" class="tab tab-props">Propriedades do Construtor</button>
        <button type="button" role="tab" aria-selected="false" class="tab">Log de Execução</button>
        <button type="button" role="tab" aria-selected="false" class="tab">Saídas</button>
      </div>
      <div class="tabpane" role="tabpanel">
        <div class="propgrid-tools">
          <button type="button" class="mini lit" aria-label="Por categoria"><svg class="icon"><use href="#i-cat"/></svg></button>
          <button type="button" class="mini" aria-label="Alfabética"><svg class="icon"><use href="#i-az"/></svg></button>
          <span class="mini-sep"></span>
          <button type="button" class="mini mini-page" aria-label="Páginas"><svg class="icon"><use href="#i-page"/></svg></button>
        </div>
        <div class="propgrid">
          <div class="propgrid-clip">
            <table>
              <colgroup><col class="p-gutter"><col class="p-name"><col></colgroup>
              <tbody>
                <tr><td class="gutter"><svg viewBox="0 0 8 10"><path d="M2 1l4 4-4 4" fill="none" stroke="#999" stroke-width="1.600"/></svg></td><th scope="row">Ícone</th><td><span class="value"><svg class="swatch" viewBox="0 0 19 13"><rect x=".5" y=".5" width="18" height="12" fill="#fff" stroke="#111"/><ellipse cx="9.500" cy="6.500" rx="7" ry="5" fill="#0a60c0"/><path d="M9 5l2-2M9 8l1-3" stroke="#cfe6ff"/></svg><b>System.Drawing.Bitmap</b></span></td></tr>
                <tr class="dim"><td class="gutter"></td><th scope="row">Lista Pai</th><td><span class="value"><svg class="swatch" viewBox="0 0 19 13"><rect x=".5" y=".5" width="18" height="12" fill="#c9caf2" stroke="#111"/><ellipse cx="9.500" cy="6.500" rx="5" ry="4" fill="#9a9bdc" stroke="#5658b0" stroke-width="2" stroke-dasharray="2 1"/></svg>Seções Customizadas</span></td></tr>
                <tr class="dim"><td class="gutter"></td><th scope="row">Prioridade</th><td><span class="value"><svg class="swatch" viewBox="0 0 19 13"><rect x=".5" y=".5" width="18" height="12" fill="#fff" stroke="#111"/><ellipse cx="9.500" cy="6.500" rx="8" ry="5.500" fill="url(#g-ball)" stroke="#274"/></svg>Neutro</span></td></tr>
                <tr><td class="gutter"></td><th scope="row">Template de Dicas</th><td><b>[Nome(C0)][Altura(T1|U9|P0|D0|N1|M1|Z0)] x [Largura(T1</b></td></tr>
                <tr><td class="gutter"></td><th scope="row">Template de Nome</th><td><b>[Família(C0)] [Sub Tipo(C0)] [Altura(T1|U9|P0|D0|N1|M1|</b></td></tr>
                <tr class="current-row"><td class="gutter"></td><th scope="row">Nome</th><td><b>Tubo Ovoide Simples</b></td></tr>
                <tr><td class="gutter"></td><th scope="row">Descrição</th><td></td></tr>
              </tbody>
            </table>
          </div>
          <div class="vscroll prop-scroll dark" aria-hidden="true"><span class="arrow up"></span><span class="gap"></span><span class="thumb"></span><span class="track"></span><span class="arrow down"></span></div>
        </div>
        <div class="prop-help"><b>Nome</b><p>Nome</p></div>
      </div>
    </section>
  </div>
</main>

<div class="actions">
  <button type="button" class="action action-ok">OK</button>
  <button type="button" class="action action-cancel">Cancelar</button>
  <button type="button" class="action action-help">Ajuda</button>
</div>

<div class="statusbar"><svg class="icon"><use href="#i-ball"/></svg><span>Construtor sem nenhum erro, já pode ser utilizado</span>
  <svg class="sizegrip" viewBox="0 0 11 11"><path d="M8 0h2v2H8zM8 4h2v2H8zM4 4h2v2H4zM8 8h2v2H8zM4 8h2v2H4zM0 8h2v2H0z" fill="#a8a8a8"/></svg>
</div>

<footer class="taskbar">
  <nav class="task-system" aria-label="Sistema">
    <button type="button" aria-label="Iniciar"><svg viewBox="0 0 16 16"><path d="M0 2.300l6.800-1v6.200H0zM7.600 1.200L16 0v7.500H7.600zM0 8.400h6.800v6.200L0 13.700zM7.600 8.400H16V16l-8.400-1.200z" fill="#fff"/></svg></button>
    <button type="button" aria-label="Pesquisar"><svg viewBox="0 0 16 16"><circle cx="10" cy="6" r="5.200" fill="none" stroke="#fff" stroke-width="1.300"/><path d="M6.300 9.700L.7 15.500" stroke="#fff" stroke-width="1.400"/></svg></button>
    <button type="button" aria-label="Cortana"><svg viewBox="0 0 16 16"><circle cx="8" cy="8" r="6.700" fill="none" stroke="#fff" stroke-width="2"/></svg></button>
    <button type="button" aria-label="Visão de tarefas"><svg viewBox="0 0 16 16"><path d="M.5 1v2.500h10V1M.5 15v-2.500h10V15M.5 5.500h10v5H.5zM14.500 1v3M14.500 8v7" fill="none" stroke="#fff" stroke-width="1.200"/><rect x="13" y="4.500" width="3" height="3" fill="#fff"/></svg></button>
  </nav>
  <nav class="task-apps" aria-label="Aplicativos">
    <button type="button" aria-label="Chrome"><svg viewBox="0 0 16 16"><circle cx="8" cy="8" r="7" fill="#fbc116"/><path d="M8 8L2 4.300A7 7 0 0114.200 4.800H8z" fill="#e33b2e"/><path d="M1.900 4.500A7 7 0 007.500 15L10 9.500 5 9.500z" fill="#2a9c4a"/><circle cx="8" cy="8" r="3.300" fill="#fff"/><circle cx="8" cy="8" r="2.600" fill="#3f7fec"/></svg></button>
    <button type="button" class="open" aria-label="Edge"><svg viewBox="0 0 16 16"><circle cx="8" cy="8" r="7.800" fill="#1565c0"/><path d="M.3 7.500A7.800 7.800 0 0115.700 7.500q0 3-3.500 3-2.700 0-2.300-1.500Q9 5 6 5 2 5 .3 7.500z" fill="#34c1c0"/><path d="M15.700 7q.3 3.500-3.500 3.500-2.700 0-2.300-1.500 0-2-1-3z" fill="#54dd77"/><path d="M6.500 7q-1 6 7 5.500-2 1-5 .5-4-2-2-6z" fill="#0a3f86"/></svg></button>
    <button type="button" aria-label="Agenda"><svg viewBox="0 0 16 16"><rect width="16" height="16" fill="#1c3f94"/><path d="M3 1.500h10v1H3z" fill="#cfdcff"/><path d="M4 5h8l2 8H2z" fill="#fff"/><path d="M6 10h5L9.500 7H7z" fill="#1c3f94"/></svg></button>
    <button type="button" class="open" aria-label="Explorador"><svg viewBox="0 0 16 16"><path d="M0 1h6l1.500 2H16v5H0z" fill="#f5b830"/><path d="M0 5h16v10H0z" fill="#ffd869"/><path d="M3 15V9h10v6h-3v-3H6v3z" fill="#3d9be6"/></svg></button>
    <button type="button" aria-label="Store"><svg viewBox="0 0 16 16"><path d="M5 4V1h6v3" fill="none" stroke="#fff" stroke-width="1.300"/><path d="M.5 4h15v12H.5z" fill="#fff"/><path d="M4.500 6.500h3v3h-3z" fill="#e8492b"/><path d="M8.500 6.500h3v3h-3z" fill="#79b82a"/><path d="M4.500 10.500h3v3h-3z" fill="#2a9ae0"/><path d="M8.500 10.500h3v3h-3z" fill="#f6b51e"/></svg></button>
    <button type="button" aria-label="Mail"><svg viewBox="0 0 16 16"><path d="M0 5l8-5 8 5v10H0z" fill="#0d62b4"/><path d="M0 15V6l8 5 8-5v9z" fill="#35a8ee"/><path d="M1.500 5h13L8 10.500z" fill="#fff"/></svg></button>
    <button type="button" aria-label="InfraWorks"><svg viewBox="0 0 16 16"><rect width="16" height="16" fill="#d6e8f7"/><path d="M5 2h6v2H9.500v7.500H11v2H5v-2h1.500V4H5z" fill="#2f5f94"/></svg></button>
    <button type="button" aria-label="Editor"><svg viewBox="0 0 16 16"><rect width="16" height="16" fill="#1664f0"/><path d="M5 2L3.500 11q0 2 2 1M2 6h4M8 7q2-1 1 2t1 4q2-1 2-6 0 3 2 3M10 4l4-2" fill="none" stroke="#fff" stroke-width="1.200"/></svg></button>
    <button type="button" aria-label="GeoGraph"><svg viewBox="0 0 16 16"><rect width="16" height="16" rx="2" fill="#f4f4ff"/><path d="M13 4H6Q4 4 3.700 8T5 12h6l.8-4H8" fill="none" stroke="#4236d9" stroke-width="2"/></svg></button>
    <button type="button" aria-label="Bloco de notas"><svg viewBox="0 0 16 16"><path d="M4 1h12l-2 14H1z" fill="#cfe9ee"/><path d="M5 4h9M4.500 6.500h9M4 9h9M3.500 11.500h9" stroke="#6ba7b8"/><path d="M4 1.500h12" stroke="#8d8d6a" stroke-width="2" stroke-dasharray="1.500 1"/><path d="M14 15l2-12v12z" fill="#cda24a"/></svg></button>
    <button type="button" class="open" aria-label="Excel"><svg viewBox="0 0 16 16"><path d="M4 0h12v16H4z" fill="#21a366"/><path d="M10 0h6v5h-6z" fill="#33c481"/><path d="M4 8h6v8H4z" fill="#185c37"/><rect y="4" width="9" height="9" fill="#107c41"/><path d="M2.500 6l4 5M6.500 6l-4 5" stroke="#fff" stroke-width="1.300"/></svg></button>
    <button type="button" class="open" aria-label="Visual Studio"><svg viewBox="0 0 16 16"><path d="M12 0l4 2v12l-4 2z" fill="#b98af0"/><path d="M12 0v4.500L4 12 1 12.500 0 11.500V4.500L1 3.500 4 4l8 7.500V16L0 5" fill="none" stroke="#8a4fd0" stroke-width="1.800"/></svg></button>
    <button type="button" class="open current-app" aria-label="Civil 3D"><svg viewBox="0 0 16 16"><rect width="16" height="16" fill="#e6f2fb"/><path d="M11.500 5V3.500Q11 2.500 8.500 2.500 5 2.500 5 7t3.500 4.500q3 0 3-2.500" fill="none" stroke="#1672b0" stroke-width="2.400"/></svg></button>
    <button type="button" class="open" aria-label="Spotify"><svg viewBox="0 0 16 16"><circle cx="8" cy="8" r="7.800" fill="#1ed760"/><path d="M3.500 5.500q5-1.500 9.500.7M4 8.300q4-1.200 8 .6M4.500 11q3.500-1 6.500.5" fill="none" stroke="#111" stroke-width="1.400"/></svg></button>
    <button type="button" class="open" aria-label="Prompt"><svg viewBox="0 0 16 16"><rect x=".5" y="2.500" width="15" height="12" fill="#000" stroke="#ccc"/><path d="M0 2h16v2.500H0z" fill="#d4d8de"/><path d="M4.500 8H2.500v3h2M6 8.500v.8M6 10.500v.8M7.500 7.500L9 11M10 11h3" fill="none" stroke="#fff"/></svg></button>
    <button type="button" class="open" aria-label="Monitor"><svg viewBox="0 0 16 16"><rect x="3.500" y=".5" width="12" height="11" fill="#f2f6fa" stroke="#9aa4ad"/><path d="M5 7l2-3 2 4 2-3 3 2" fill="none" stroke="#1e8fd0"/><path d="M7 12h5v2H5v1h9" fill="none" stroke="#aab" stroke-width="1.500"/><rect x="0" y="5" width="3" height="10" fill="#b9bfc5"/></svg></button>
    <button type="button" class="open" aria-label="Paint"><svg viewBox="0 0 16 16"><path d="M1 10Q0 4 7 3t6 6q0 5-7 6-3 0-2-2t-3-3z" fill="#dff0f8" stroke="#89b"/><circle cx="5" cy="7" r="1.400" fill="#e44"/><circle cx="9" cy="6" r="1.400" fill="#3a3"/><circle cx="9" cy="10.500" r="1.400" fill="#38d"/><path d="M13 15l-1-9 1-6h2l1 6-1 9z" fill="#e8892a"/></svg></button>
  </nav>
  <div class="tray">
    <button type="button" aria-label="Ícones ocultos"><svg viewBox="0 0 16 16"><path d="M2.500 10.500L8 5l5.500 5.500" fill="none" stroke="#fff" stroke-width="1.400"/></svg></button>
    <button type="button" aria-label="Rede"><svg viewBox="0 0 16 16"><path d="M4 3.500h11.500v8H4M9.500 11.500V15M6 15.300h7M.5 2.500h4v3h-4zM2.500 5.500v7" fill="none" stroke="#fff" stroke-width="1.200"/></svg></button>
    <button type="button" aria-label="Volume"><svg viewBox="0 0 16 16"><path d="M.7 5.500h2L6 2.500v11L2.700 10.500h-2z" fill="none" stroke="#fff" stroke-width="1.100"/><path d="M8 6q1.500 2 0 4M10 4q3 4 0 8M12.500 2q4.500 6 0 12" fill="none" stroke="#fff"/></svg></button>
    <button type="button" aria-label="Dropbox"><svg viewBox="0 0 16 16"><path d="M4 1l4 2.500L4 6 0 3.500zM12 1l4 2.500L12 6 8 3.500zM4 6l4 2.500L4 11 0 8.500zM12 6l4 2.500-4 2.500-4-2.500zM8 9.800l4 2.500-4 2.500-4-2.500z" fill="#fff"/></svg></button>
    <span class="lang">POR</span>
    <time>20:21</time>
    <button type="button" class="notify" aria-label="Notificações"><svg viewBox="0 0 16 16"><path d="M0 1h16v11.500h-5L8 16l-2.500-3.500H0z" fill="#fff"/><path d="M3 4.500h10M3 7h10M3 9.500h7" stroke="#17222d" stroke-width="1.100"/></svg></button>
  </div>
</footer>
</body>
</html>
```
FILE: styles.css
```css
* { box-sizing: border-box; }

html, body { height: 100%; }

body {
  margin: 0;
  display: flex;
  flex-direction: column;
  overflow: hidden;
  background: #f0f0f0;
  color: #000;
  font: 11px/14px "Liberation Sans", Arial, sans-serif;
}

h1, h2, h3, p, ul { margin: 0; padding: 0; font-size: inherit; font-weight: normal; }
ul { list-style: none; }
button, input, select { font: inherit; color: inherit; border-radius: 0; }
button { padding: 0; border: 0; background: none; }
input, select { border: 0; padding: 0; outline: 0; }
select { appearance: none; }
.sprite { position: absolute; width: 0; height: 0; }
.icon { width: 16px; height: 16px; flex: none; display: block; }
.icon-lg { width: 20px; height: 20px; flex: none; display: block; }

/* Title bar */
.titlebar {
  flex: none;
  height: 23px;
  display: flex;
  align-items: flex-start;
  background: #4b4a48;
  color: #fff;
  padding-left: 8px;
}
.titlebar-icon { width: 16px; height: 16px; }
.titlebar h1 { margin-left: 5px; font: 11px/16px "Open Sans", sans-serif; }
.window-controls { margin-left: auto; display: flex; }
.window-controls button { width: 46px; height: 16px; display: grid; place-items: center; }
.window-controls svg { width: 12px; height: 12px; }

/* Tool strips */
.toolbar {
  flex: none;
  height: 31px;
  display: flex;
  align-items: center;
  background: linear-gradient(#fefefe, #f0f0f0);
  font: 11px/16px "Open Sans", sans-serif;
}
.main-toolbar { padding-bottom: 2px; }
.grip {
  width: 3px;
  height: 20px;
  margin: 0 4px 0 3px;
  background: repeating-linear-gradient(#b4b4b4 0 2px, transparent 2px 4px);
}
.sep { flex: none; width: 1px; height: 20px; margin: 0 2px 0 3px; background: #bdbdbd; }
.tool { flex: none; height: 26px; display: flex; align-items: center; gap: 3px; padding-left: 1px; white-space: nowrap; }
.tool-new { width: 55px; }
.tool-icon { width: 23px; padding: 0; justify-content: center; }
.tool-letter { font-weight: bold; }
.tool-play { width: 57px; padding-left: 5px; gap: 6px; }
.tool-help { width: 89px; }
.tool-history { width: 27px; padding: 0; justify-content: center; }

/* Work area */
.workspace {
  flex: 1;
  min-height: 0;
  display: grid;
  grid-template-columns: 438px minmax(0, 1fr) 669px;
  gap: 5px;
}
.column { min-width: 0; min-height: 0; display: flex; flex-direction: column; }
.group {
  min-width: 0;
  min-height: 0;
  margin: 0;
  padding: 3px 2px 2px;
  border: 1px solid #dcdcdc;
  display: flex;
  flex-direction: column;
}
.group legend { margin-left: 4px; padding: 0 2px; line-height: 12px; }

/* Scroll bars */
.vscroll { flex: none; width: 17px; display: flex; flex-direction: column; background: #f0f0f0; }
.thumb { background: #cdcdcd; }
.arrow { flex: none; width: 17px; height: 17px; display: grid; place-items: center; }
.arrow::before { content: ""; width: 6px; height: 6px; border: solid #a0a0a0; border-width: 1px 0 0 1px; }
.dark .arrow::before { border-color: #505050; border-width: 2px 0 0 2px; }
.up::before { transform: rotate(45deg); }
.down::before { transform: rotate(225deg); }
.left::before { transform: rotate(-45deg); }
.right::before { transform: rotate(135deg); }
.hscroll { flex: none; height: 17px; display: flex; background: #f0f0f0; }
.hscroll .thumb { flex: 549; }
.hscroll .track { flex: 195; }
.corner { width: 17px; }

/* Toolbox */
.toolbox-group { flex: 1; }
.toolbox-search {
  flex: none;
  height: 14px;
  padding: 0 4px;
  border: 1px solid #ccd3e2;
  background: #fff;
  font-style: italic;
}
.toolbox-search::placeholder { color: #666; }
.toolbox { flex: 1; min-height: 0; display: flex; border: 1px solid #ccd3e2; background: #fff; }
.toolbox-list { flex: 1; overflow: hidden; padding: 2px 0 0 21px; }
.toolbox-list li { height: 18px; display: flex; align-items: center; gap: 5px; padding-left: 20px; white-space: nowrap; }
.category {
  position: relative;
  width: 161px;
  height: 18px;
  margin-top: 2px;
  padding-left: 6px;
  background: #e7ebef;
  line-height: 18px;
  font-weight: bold;
}
.category:first-child { margin-top: 1px; }
.category::before {
  content: "";
  position: absolute;
  left: -14px;
  top: 6px;
  border: solid transparent;
  border-width: 0 0 6px 6px;
  border-bottom-color: #444;
}
.toolbox-scroll .thumb { flex: 413; }
.toolbox-scroll .track { flex: 228; }
.splitter { flex: none; height: 2px; margin: 2px 0; background: repeating-linear-gradient(90deg, #333 0 1px, #fff 1px 2px); }

/* Activity inspector */
.inspector-group { flex: 0 0 218px; }
.inspector { flex: 1; display: flex; flex-direction: column; border: 1px solid #a0a0a0; font: 11px/14px "Open Sans", sans-serif; }
.inspector-type { padding: 6px 2px 0; height: 28px; }
.inspector-tools { display: flex; align-items: flex-start; height: 24px; padding: 0 4px 0 2px; }
.mini { flex: none; width: 22px; height: 22px; display: grid; place-items: center; }
.mini.active { border: 1px solid #222; background: #dbe4ee; }
.mini.lit { border: 1px solid #9cc8ee; background: #c2dff6; }
.mini-sep { flex: none; width: 1px; height: 22px; margin: 0 6px 0 2px; background: #999; }
.inspector-tools label { width: 42px; line-height: 22px; }
.inspector-tools input { flex: 1; min-width: 0; height: 21px; border: 1px solid #707070; background: #fff; }
.clear { width: 56px; height: 21px; border: 1px solid #707070; background: #f4f4f4; }
.inspector-body { flex: 1; border-top: 1px solid #a0a0a0; background: #fff; }
.inspector-category { display: flex; align-items: center; gap: 7px; height: 21px; padding-left: 1px; border: 1px dashed #888; background: #f0f0f0; font-weight: bold; }
.collapse { width: 9px; height: 9px; border: 1px solid #222; background: linear-gradient(#222, #222) center / 5px 1px no-repeat #fff; }
.inspector-row { display: flex; height: 22px; border-left: 14px solid #f0f0f0; border-bottom: 1px solid #f0f0f0; }
.inspector-row label { width: 249px; padding-left: 5px; line-height: 22px; border-right: 1px solid #f0f0f0; }
.inspector-row input { flex: 1; min-width: 0; padding-left: 3px; }

/* Designer */
.column-middle { gap: 7px; }
.designer-group { flex: 0 0 435px; }
.designer { flex: 1; min-height: 0; display: flex; flex-direction: column; background: #fff; }
.breadcrumb { flex: none; height: 25px; padding-left: 5px; line-height: 24px; border-bottom: 2px solid #e7eaf0; color: #1b2b4b; }
.designer-view { flex: 1; min-height: 0; display: flex; padding-bottom: 2px; }
.designer-surface { flex: 1; min-width: 0; overflow: hidden; }
.designer-scroll .gap { flex: 13; }
.designer-scroll .thumb { flex: 195; }
.designer-scroll .track { flex: 147; }
.flowchart { position: relative; width: 614px; height: 500px; margin: 9px auto 0; border: 1px solid #cdd3e0; }
.node-title { display: flex; align-items: center; gap: 6px; height: 21px; padding: 0 0 2px 2px; border-bottom: 1px solid #cdd3e0; background: #e7ebef; }
.links { position: absolute; left: 0; top: 0; width: 612px; height: 380px; }
.node { position: absolute; width: 200px; height: 49px; border: 1px solid #cdd3e0; border-radius: 2px; background: #fff; }
.node p { line-height: 28px; text-align: center; font-style: italic; color: #666; }
.start { left: 276px; top: 30px; width: 60px; height: 76px; border-radius: 4px; display: flex; flex-direction: column; align-items: center; padding-top: 11px; font: 11px/16px "Open Sans", sans-serif; }
.start svg { width: 40px; height: 40px; margin-bottom: 3px; }
.n-variaveis { left: 16px; top: 114px; }
.n-interna { left: 16px; top: 182px; }
.n-externa { left: 16px; top: 254px; }
.n-eixo { left: 16px; top: 324px; }
.n-montante { left: 336px; top: 144px; }
.n-jusante { left: 336px; top: 234px; }
.n-solido { left: 336px; top: 317px; height: 22px; }
.n-solido .node-title { height: 20px; border-bottom: 0; }
.selected, .selected .node-title { border-color: #e0ba50; }
.selected .node-title { background: #ffe8a6; }

/* Property data grid */
.data-group { flex: 1; padding-left: 1px; }
.datagrid { flex: 1; min-height: 0; display: flex; flex-direction: column; border: 1px solid #000; background: #fff; }
.datagrid-view { flex: 1; min-height: 0; display: flex; }
.datagrid-clip { flex: 1; min-width: 0; overflow: hidden; }
.datagrid table { width: 841px; table-layout: fixed; border-spacing: 0; }
.c-head { width: 41px; }
.c-data { width: 100px; }
.datagrid th, .datagrid td { padding: 0 0 0 3px; border: solid #a0a0a0; border-width: 0 1px 1px 0; white-space: nowrap; overflow: hidden; text-align: left; font-weight: normal; }
.datagrid th { height: 34px; padding: 2px 0 0 7px; line-height: 13px; border-right-color: #e2e2e2; }
.datagrid td { height: 22px; }
.datagrid th:first-child { border-right-color: #a0a0a0; }
.datagrid .rh { padding: 0; border-bottom-color: #e2e2e2; }
.datagrid .ro { background: #d2d2d2; }
.datagrid .sel { background: #0078d7; color: #fff; }
.datagrid .cb { padding: 0; background: #e1e1e1; }
.datagrid select {
  display: block;
  width: 99px;
  height: 21px;
  padding-left: 2px;
  border: 1px solid #acacac;
  background: #e1e1e1 url("data:image/svg+xml,%3Csvg xmlns='http://www.w3.org/2000/svg' width='16' height='19'%3E%3Cpath d='M.5 0v19' stroke='%23a0a0a0'/%3E%3Cpath d='M4.500 7.500l4 4 4-4' fill='none' stroke='%23555'/%3E%3C/svg%3E") right center no-repeat;
}
.current { display: block; margin-left: 8px; border: solid transparent; border-width: 5px 0 5px 5px; border-left-color: #404040; width: 0; }
.data-vscroll .thumb { flex: 381; }
.data-vscroll .track { flex: 38; }

/* Preview */
.column-right { gap: 5px; }
.preview-group { flex: 1; padding: 3px 1px 2px; }
.preview-toolbar { height: 30px; }
.tool-wide { width: 27px; padding: 0; justify-content: center; }
.shading {
  width: 91px;
  height: 23px;
  margin-right: 2px;
  padding: 0 19px 0 4px;
  overflow: hidden;
  background: #fff url("data:image/svg+xml,%3Csvg xmlns='http://www.w3.org/2000/svg' width='11' height='4'%3E%3Cpath d='M0 0h6L3 4z'/%3E%3C/svg%3E") right center no-repeat;
}
.checked { border: 1px solid #0078d7; background: #f4f9fd; }
.tool-drop { width: 30px; gap: 2px; padding-left: 3px; }
.caret { border: solid transparent; border-width: 4px 3px 0; border-top-color: #000; }
.viewport { position: relative; flex: 1; min-height: 0; background: #fff; }
.model { display: block; width: 100%; height: 100%; }
.coords { position: absolute; left: 2px; bottom: 2px; font: 11px/16px "Open Sans", sans-serif; }

/* Builder property tabs */
.tabs { flex: none; padding-right: 2px; }
.tablist { display: flex; align-items: flex-end; height: 20px; }
.tab { height: 18px; padding: 0 6px 2px 4px; border: solid #dcdcdc; border-width: 1px 1px 0 0; background: #f0f0f0; font: 11px/16px "Open Sans", sans-serif; }
.tab-props { height: 20px; padding: 0 3px 3px 6px; border-left-width: 1px; background: #fff; font-family: "Liberation Sans", Arial, sans-serif; }
.tabpane { height: 212px; padding: 5px 4px 5px 6px; border: 1px solid #dcdcdc; background: #fff; }
.propgrid-tools { display: flex; align-items: flex-start; height: 25px; padding: 1px 0 0 2px; background: #f0f0f0; }
.propgrid { display: flex; height: 113px; border: 1px solid #a0a0a0; background: #fff; }
.propgrid-clip { flex: 1; min-width: 0; overflow: hidden; }
.propgrid table { width: 100%; table-layout: fixed; border-spacing: 0; }
.p-gutter { width: 21px; }
.p-name { width: 297px; }
.propgrid th, .propgrid td { height: 16px; padding: 0 0 0 2px; border: solid #f0f2f7; border-width: 0 1px 1px 0; text-align: left; font-weight: normal; line-height: 15px; white-space: nowrap; overflow: hidden; }
.propgrid .gutter { background: #f4f7fc; padding-left: 6px; }
.gutter svg { display: block; width: 8px; height: 10px; }
.current-row th { background: #f4f7fc; }
.dim { color: #6d6d6d; }
.value { display: flex; align-items: center; gap: 9px; }
.propgrid .value { margin-left: -2px; }
.swatch { width: 19px; height: 13px; }
.prop-scroll .gap { flex: 10; }
.prop-scroll .thumb { flex: 46; }
.prop-scroll .track { flex: 21; }
.prop-help { height: 60px; margin-top: 3px; padding: 0 4px; border: 1px solid #a0a0a0; background: #f0f0f0; line-height: 16px; }

/* Dialog actions */
.actions { flex: none; height: 41px; display: flex; justify-content: flex-end; align-items: center; gap: 2px; padding-right: 7px; background: linear-gradient(#fdfdfd, #f1f1f1); }
.action { height: 27px; background: #a0a0a0; font: 11px/16px "Open Sans", sans-serif; }
.action-ok { width: 56px; }
.action-cancel { width: 76px; }
.action-help { width: 64px; }

.statusbar { flex: none; height: 22px; display: flex; align-items: center; gap: 3px; padding-left: 1px; border-top: 1px solid #d7d7d7; font: 11px/16px "Open Sans", sans-serif; }
.sizegrip { margin: auto 2px 2px auto; width: 11px; height: 11px; }

/* Task bar */
.taskbar { flex: none; height: 30px; display: flex; background: #18222d; color: #fff; font: 11px/16px "Open Sans", sans-serif; }
.taskbar button { display: grid; place-items: center; height: 30px; }
.taskbar svg { width: 16px; height: 16px; display: block; }
.task-system { display: flex; margin-right: 2px; }
.task-system button { width: 36px; }
.task-apps { display: flex; }
.task-apps button { width: 37px; }
.task-apps .open { background: linear-gradient(#bdb8b4, #bdb8b4) center bottom / 28px 2px no-repeat; }
.task-apps .current-app { background: linear-gradient(#bdb8b4, #bdb8b4) center bottom / 34px 2px no-repeat #47515b; }
.tray { margin-left: auto; display: flex; align-items: center; padding-right: 4px; }
.tray button { width: 24px; }
.lang { width: 42px; padding-left: 6px; }
.tray time { width: 38px; }
.tray .notify { width: 44px; padding-right: 13px; border-right: 1px solid #5c6670; }
```
